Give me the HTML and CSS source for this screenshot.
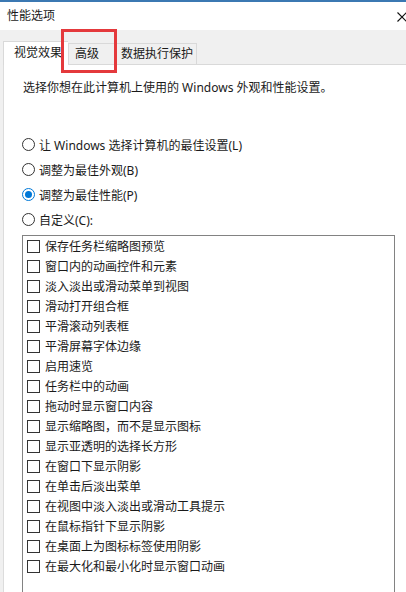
FILE: index.html
```html
<!DOCTYPE html>
<html lang="zh-CN">
<head>
    <meta charset="UTF-8">
    <meta name="viewport" content="width=device-width, initial-scale=1.0">
    <title>性能选项</title>
    <link rel="stylesheet" href="styles.css">
</head>
<body>
    <div class="window">
        <div class="titlebar">
            <span class="title">性能选项</span>
            <svg class="close" width="10" height="10" viewBox="0 0 10 10">
                <path d="M0.5 0.5 L9.5 9.5 M9.5 0.5 L0.5 9.5" stroke="#111" stroke-width="1.1" fill="none"/>
            </svg>
        </div>

        <div class="tabs">
            <div class="tab active">视觉效果</div>
            <div class="tab tab-adv">高级</div>
            <div class="tab tab-dep">数据执行保护</div>
        </div>
        <div class="mark"></div>

        <div class="page">
            <p class="intro">选择你想在此计算机上使用的 Windows 外观和性能设置。</p>

            <div class="options">
                <label class="option"><span class="radio"></span>让 Windows 选择计算机的最佳设置(L)</label>
                <label class="option"><span class="radio"></span>调整为最佳外观(B)</label>
                <label class="option"><span class="radio checked"></span>调整为最佳性能(P)</label>
                <label class="option"><span class="radio"></span>自定义(C):</label>
            </div>

            <div class="listbox">
                <div class="item"><span class="box"></span>保存任务栏缩略图预览</div>
                <div class="item"><span class="box"></span>窗口内的动画控件和元素</div>
                <div class="item"><span class="box"></span>淡入淡出或滑动菜单到视图</div>
                <div class="item"><span class="box"></span>滑动打开组合框</div>
                <div class="item"><span class="box"></span>平滑滚动列表框</div>
                <div class="item"><span class="box"></span>平滑屏幕字体边缘</div>
                <div class="item"><span class="box"></span>启用速览</div>
                <div class="item"><span class="box"></span>任务栏中的动画</div>
                <div class="item"><span class="box"></span>拖动时显示窗口内容</div>
                <div class="item"><span class="box"></span>显示缩略图，而不是显示图标</div>
                <div class="item"><span class="box"></span>显示亚透明的选择长方形</div>
                <div class="item"><span class="box"></span>在窗口下显示阴影</div>
                <div class="item"><span class="box"></span>在单击后淡出菜单</div>
                <div class="item"><span class="box"></span>在视图中淡入淡出或滑动工具提示</div>
                <div class="item"><span class="box"></span>在鼠标指针下显示阴影</div>
                <div class="item"><span class="box"></span>在桌面上为图标标签使用阴影</div>
                <div class="item"><span class="box"></span>在最大化和最小化时显示窗口动画</div>
            </div>
        </div>
    </div>
</body>
</html>
```

FILE: styles.css
```css
body {
    margin: 0;
    font-family: "Noto Sans", "Noto Sans CJK SC", sans-serif;
    font-size: 12px;
    color: #1a1a1a;
}

.window {
    position: relative;
    width: 406px;
    height: 592px;
    overflow: hidden;
    background-color: #f0f0f0;
}

.titlebar {
    display: flex;
    justify-content: space-between;
    align-items: center;
    height: 28px;
    border-top: 2px solid #3b78b2;
    background-color: #fff;
    padding-left: 7px;
}

.title {
    line-height: 16px;
}

.close {
    margin-right: -1px;
    margin-top: 1px;
}

.tabs {
    display: flex;
    align-items: flex-end;
    height: 34px;
    padding-left: 3px;
}

.tab {
    box-sizing: border-box;
    height: 21px;
    line-height: 20px;
    border: 1px solid #d9d9d9;
    border-bottom: none;
    background-color: #f0f0f0;
    white-space: nowrap;
}

.tab.active {
    position: relative;
    z-index: 1;
    width: 65px;
    height: 24px;
    line-height: 22px;
    margin-bottom: -1px;
    padding-left: 10px;
    background-color: #fff;
    border-right: none;
}

.tab-adv {
    width: 49px;
    padding-left: 6px;
}

.tab-dep {
    width: 80px;
    padding-left: 4px;
    border-left: none;
}

/* red annotation box round the 高级 tab */
.mark {
    position: absolute;
    left: 61px;
    top: 29px;
    width: 50px;
    height: 38px;
    border: 3px solid #e4393c;
    z-index: 2;
}

.page {
    margin-left: 3px;
    width: 420px;
    height: 600px;
    background-color: #fff;
    border-top: 1px solid #d9d9d9;
    border-left: 1px solid #dcdcdc;
    padding: 15px 0 0 19px;
    box-sizing: border-box;
}

.intro {
    margin: 0;
    line-height: 16px;
}

.options {
    margin-top: 36px;
}

.option {
    display: flex;
    align-items: center;
    height: 25px;
    margin-left: -1px;
}

.radio {
    box-sizing: border-box;
    width: 13px;
    height: 13px;
    border: 1px solid #333;
    border-radius: 50%;
    margin-right: 4px;
    display: flex;
    align-items: center;
    justify-content: center;
}

.radio.checked {
    border-color: #0078d7;
}

.radio.checked::after {
    content: "";
    width: 7px;
    height: 7px;
    border-radius: 50%;
    background-color: #0078d7;
}

.listbox {
    margin-top: 3px;
    margin-left: -1px;
    width: 373px;
    height: 400px;
    box-sizing: border-box;
    border: 1px solid #828282;
    padding-left: 4px;
}

.item {
    display: flex;
    align-items: center;
    height: 20px;
}

.box {
    box-sizing: border-box;
    width: 13px;
    height: 13px;
    border: 1px solid #333;
    margin-right: 5px;
}
```
